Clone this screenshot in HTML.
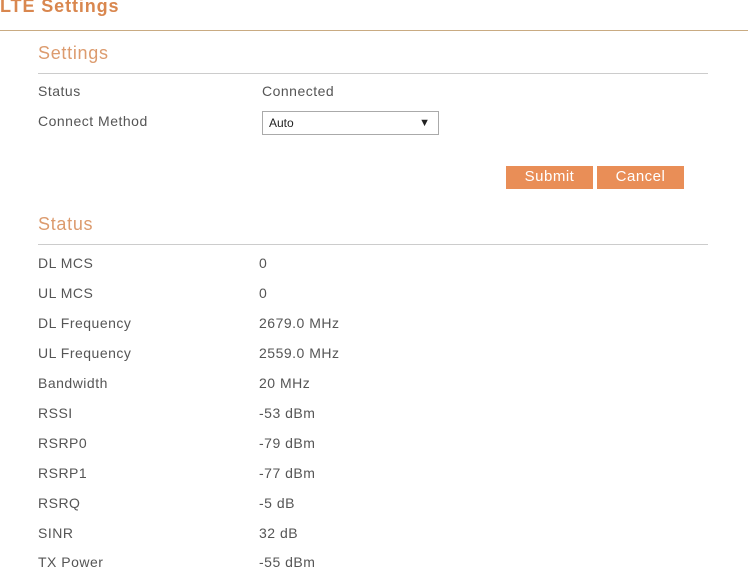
<!DOCTYPE html>
<html><head><style>
body{margin:0;width:748px;height:568px;background:#fff;font-family:"Liberation Sans",Arial,sans-serif;position:relative;overflow:hidden;color:#555;font-size:14px;letter-spacing:0.5px}
.a{position:absolute;white-space:nowrap}
.t{left:0;top:-4px;font-size:18px;font-weight:bold;color:#d9874f;letter-spacing:0.9px}
.h{font-size:18px;color:#dc9b6e;left:38px;letter-spacing:0.7px}
.ln{position:absolute;height:1px}
.btn{position:absolute;top:166px;height:23px;width:87px;background:#e98e57;color:#fff;font-size:15px;text-align:center;line-height:22px}
</style></head><body>
<div class="a t">LTE Settings</div>
<div class="ln" style="left:0;top:30px;width:748px;background:#c9ab82"></div>
<div class="a h" style="top:43px">Settings</div>
<div class="ln" style="left:38px;top:73px;width:670px;background:#ccc"></div>
<div class="a" style="left:38px;top:83px">Status</div><div class="a" style="left:262px;top:83px">Connected</div>
<div class="a" style="left:38px;top:113px">Connect Method</div>
<div class="a" style="left:262px;top:111px;width:175px;height:22px;border:1px solid #aaa;font-size:12px;color:#222;line-height:22px;letter-spacing:0"><span style="margin-left:6px">Auto</span><span style="position:absolute;right:8px;font-size:11px">▼</span></div>
<div class="btn" style="left:506px">Submit</div>
<div class="btn" style="left:597px">Cancel</div>
<div class="a h" style="top:214px">Status</div>
<div class="ln" style="left:38px;top:244px;width:670px;background:#ccc"></div>
<div class="a" style="left:38px;top:255px">DL MCS</div><div class="a" style="left:259px;top:255px">0</div>
<div class="a" style="left:38px;top:285px">UL MCS</div><div class="a" style="left:259px;top:285px">0</div>
<div class="a" style="left:38px;top:315px">DL Frequency</div><div class="a" style="left:259px;top:315px">2679.0 MHz</div>
<div class="a" style="left:38px;top:345px">UL Frequency</div><div class="a" style="left:259px;top:345px">2559.0 MHz</div>
<div class="a" style="left:38px;top:375px">Bandwidth</div><div class="a" style="left:259px;top:375px">20 MHz</div>
<div class="a" style="left:38px;top:405px">RSSI</div><div class="a" style="left:259px;top:405px">-53 dBm</div>
<div class="a" style="left:38px;top:435px">RSRP0</div><div class="a" style="left:259px;top:435px">-79 dBm</div>
<div class="a" style="left:38px;top:465px">RSRP1</div><div class="a" style="left:259px;top:465px">-77 dBm</div>
<div class="a" style="left:38px;top:495px">RSRQ</div><div class="a" style="left:259px;top:495px">-5 dB</div>
<div class="a" style="left:38px;top:525px">SINR</div><div class="a" style="left:259px;top:525px">32 dB</div>
<div class="a" style="left:38px;top:554px">TX Power</div><div class="a" style="left:259px;top:554px">-55 dBm</div>
</body></html>
